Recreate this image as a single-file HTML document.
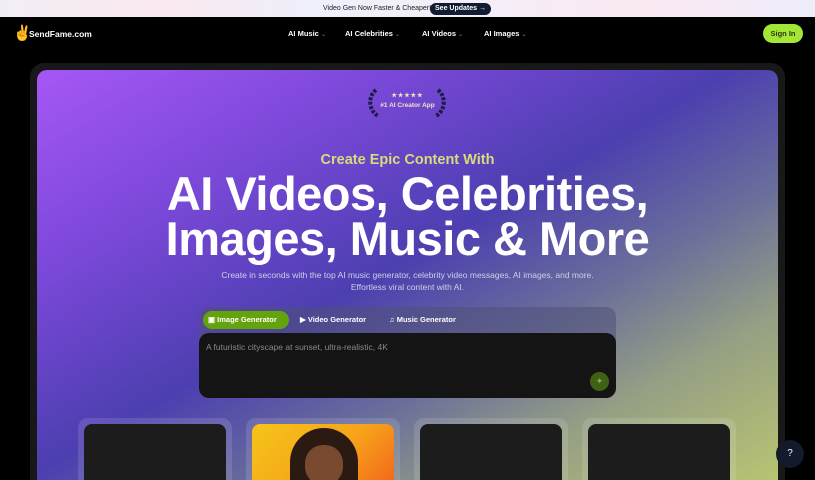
<!DOCTYPE html>
<html><head><meta charset="utf-8"><style>
*{margin:0;padding:0;box-sizing:border-box}
html,body{width:815px;height:480px;overflow:hidden}
body{background:#000;font-family:"Liberation Sans",sans-serif;position:relative}
.banner{position:absolute;left:0;top:0;width:815px;height:17px;background:linear-gradient(90deg,#f3eef6,#fbe9f1 20%,#eef0fb 40%,#f5eef8 60%,#fbe9f3 80%,#eeeefa);font-size:7px;color:#222}
.banner .t{position:absolute;left:323px;top:5px}
.banner .b{position:absolute;left:430px;top:3px;width:61px;height:12px;border-radius:6px;background:#111b33;color:#fff;font-weight:bold;font-size:7px;text-align:center;line-height:12px}
.nav{position:absolute;top:17px;left:0;width:815px;height:33px;color:#fff;font-size:7.5px;font-weight:bold}
.nav span{position:absolute;top:12px}
.nav .c{color:#888;font-weight:normal;font-size:6px}
.sign{position:absolute;left:763px;top:24px;width:40px;height:19px;border-radius:10px;background:#a3e635;color:#2b3a10;font-size:7.5px;font-weight:bold;text-align:center;line-height:19px}
.frame{position:absolute;left:30px;top:63px;width:755px;height:417px;border-radius:14px 14px 0 0;background:#181818}
.hero{position:absolute;left:37px;top:70px;width:741px;height:410px;border-radius:10px 10px 0 0;background:linear-gradient(150deg,#a657f5 0%,#7a48d8 25%,#4c3fb0 48%,#6a6f9a 65%,#959f84 80%,#b8c472 100%)}
.h{position:absolute;left:0;width:815px;text-align:center;color:#fff;font-weight:bold}
.card{position:absolute;top:418px;width:154px;height:62px;border-radius:10px 10px 0 0;background:rgba(255,255,255,.12)}
.card i{position:absolute;left:6px;top:6px;right:6px;bottom:0;border-radius:8px 8px 0 0;background:#1c1c1c}
</style></head><body>
<div class="banner"><span class="t">Video Gen Now Faster &amp; Cheaper!</span><span class="b">See Updates →</span></div>
<div class="nav">
<span style="left:13px;top:7px;font-size:15px">✌</span>
<span style="left:29px;font-size:8.5px">SendFame.com</span>
<span style="left:288px">AI Music <b class="c">⌄</b></span>
<span style="left:345px">AI Celebrities <b class="c">⌄</b></span>
<span style="left:422px">AI Videos <b class="c">⌄</b></span>
<span style="left:484px">AI Images <b class="c">⌄</b></span>
</div>
<div class="sign">Sign In</div>
<div class="frame"></div>
<div class="hero"></div>
<svg style="position:absolute;left:364px;top:88px" width="86" height="30"><path d="M12 2 C4 8 4 22 14 28" stroke="#1e1b4b" stroke-width="4" stroke-dasharray="3 1.5" fill="none"/><path d="M74 2 C82 8 82 22 72 28" stroke="#1e1b4b" stroke-width="4" stroke-dasharray="3 1.5" fill="none"/></svg>
<div class="h" style="top:92px;font-size:6px;color:#e8e8c0;letter-spacing:1px">★★★★★</div>
<div class="h" style="top:102px;font-size:6.5px;color:#e8e8c0">#1 AI Creator App</div>
<div class="h" style="top:152px;font-size:14.5px;color:#d6dd7a">Create Epic Content With</div>
<div class="h" style="top:171px;font-size:47px;line-height:45px;letter-spacing:-0.5px">AI Videos, Celebrities,<br>Images, Music &amp; More</div>
<div class="h" style="top:269px;font-size:8.5px;line-height:12px;color:#cfd0e6;font-weight:normal">Create in seconds with the top AI music generator, celebrity video messages, AI images, and more.<br>Effortless viral content with AI.</div>
<div style="position:absolute;left:199px;top:307px;width:417px;height:91px;border-radius:10px;background:rgba(80,80,120,.55)"></div>
<div style="position:absolute;left:203px;top:311px;width:86px;height:18px;border-radius:9px;background:#65a30d"></div>
<div style="position:absolute;left:208px;top:315px;font-size:7.5px;color:#fff;font-weight:bold">▣ Image Generator</div>
<div style="position:absolute;left:300px;top:315px;font-size:7.5px;color:#fff;font-weight:bold">▶ Video Generator</div>
<div style="position:absolute;left:389px;top:315px;font-size:7.5px;color:#fff;font-weight:bold">♫ Music Generator</div>
<div style="position:absolute;left:199px;top:333px;width:417px;height:65px;border-radius:10px;background:#141414"></div>
<div style="position:absolute;left:206px;top:342px;font-size:8.5px;color:#8a8a8a">A futuristic cityscape at sunset, ultra-realistic, 4K</div>
<div style="position:absolute;left:590px;top:372px;width:19px;height:19px;border-radius:50%;background:#3f6212;color:#86a85a;font-size:9px;text-align:center;line-height:19px">✦</div>
<div class="card" style="left:78px"><i></i></div>
<div class="card" style="left:246px"><i style="background:linear-gradient(135deg,#f5c518,#f7a21b 60%,#f26a1b);"></i></div>
<div style="position:absolute;left:290px;top:428px;width:68px;height:52px;border-radius:34px 34px 0 0;background:#2a1a12"></div>
<div style="position:absolute;left:305px;top:445px;width:38px;height:40px;border-radius:18px;background:#7a4a30"></div>
<div class="card" style="left:414px"><i></i></div>
<div class="card" style="left:582px"><i></i></div>
<div style="position:absolute;left:776px;top:440px;width:28px;height:28px;border-radius:50%;background:#131a2c;color:#fff;font-size:10px;text-align:center;line-height:28px">?</div>
</body></html>
